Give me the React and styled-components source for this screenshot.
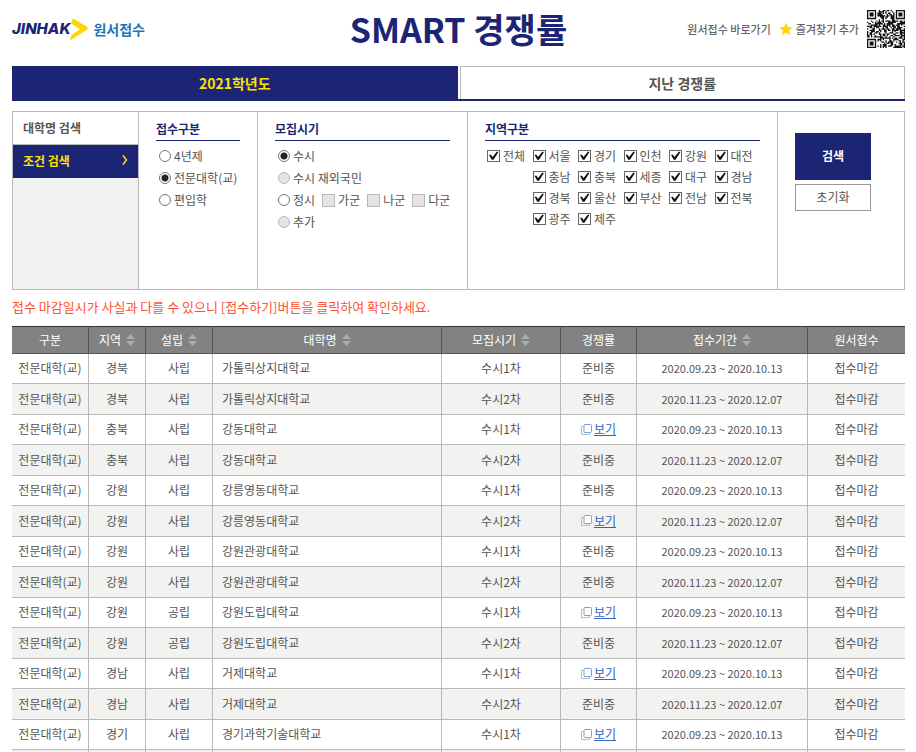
import { useState } from "react"
import styled, { createGlobalStyle } from "styled-components"

const COLOR = {
  navy: '#1c2574',
  yellow: '#ffe100',
  line: '#b8b8b8',
  text: '#555',
  soft: '#f2f2f1',
  notice: '#ff5232',
  link: '#3465bd'
}

const GlobalStyle = createGlobalStyle`
  * {
    box-sizing: border-box;
  }

  body {
    margin: 0;
    background: #fff;
    color: ${COLOR.text};
    font-family: "Noto Sans CJK KR", sans-serif;
    font-size: 12px;
    line-height: 18px;
  }

  button, input {
    font-family: inherit;
    margin: 0;
  }
`

const Page = styled.div`
  padding: 0 11px 0 12px;
`

/* header */
const Header = styled.header`
  display: grid;
  grid-template-columns: 1fr auto 1fr;
  align-items: center;
  height: 66px;
  padding-bottom: 8px;
`
const Logo = styled.a`
  display: flex;
  align-items: center;
  color: ${COLOR.navy};
  text-decoration: none;
`
const LogoName = styled.span`
  font-family: Inter, "Liberation Sans", sans-serif;
  font-size: 15px;
  font-style: italic;
  font-weight: 800;
`
const LogoService = styled.span`
  margin-left: 5px;
  color: #1a76b8;
  font-size: 14px;
  font-weight: 700;
`
const Title = styled.h1`
  margin: 0;
  color: ${COLOR.navy};
  font-size: 34px;
  font-weight: 700;
  line-height: 48px;
`
const QuickMenu = styled.nav`
  display: flex;
  align-items: center;
  justify-content: flex-end;
`
const QuickLink = styled.a`
  display: flex;
  align-items: center;
  gap: 3px;
  margin-right: 8px;
  color: #666;
  font-size: 11px;
  font-weight: 500;
  text-decoration: none;
  white-space: nowrap;
`

/* tabs */
const TabList = styled.div`
  display: flex;
  gap: 2px;
  border-bottom: 2px solid ${COLOR.navy};
`
const Tab = styled.button`
  flex: 1;
  height: 33px;
  padding: 0;
  border: 1px solid ${({ $active }) => $active ? COLOR.navy : COLOR.line};
  border-bottom: 0;
  background: ${({ $active }) => $active ? COLOR.navy : '#fff'};
  color: ${({ $active }) => $active ? COLOR.yellow : COLOR.text};
  font-size: 14px;
  font-weight: 700;
  cursor: pointer;
`

/* search */
const SearchBox = styled.form`
  display: grid;
  grid-template-columns: 126px 119px 210px minmax(0, 1fr) 126px;
  min-height: 179px;
  margin-top: 10px;
  border: 1px solid ${COLOR.line};
`
const SideMenu = styled.div`
  display: flex;
  flex-direction: column;
  border-right: 1px solid ${COLOR.line};
  background: ${COLOR.soft};
`
const SideButton = styled.button`
  display: flex;
  align-items: center;
  justify-content: space-between;
  height: 33px;
  padding: 0 10px 2px;
  border: 0;
  border-bottom: 1px solid ${({ $active }) => $active ? COLOR.navy : COLOR.line};
  background: ${({ $active }) => $active ? COLOR.navy : '#fff'};
  color: ${({ $active }) => $active ? COLOR.yellow : COLOR.text};
  font-size: 12px;
  font-weight: 700;
  cursor: pointer;
`
const Section = styled.fieldset`
  min-width: 0;
  margin: 0;
  padding: 8px 17px 0;
  border: 0;
  border-right: 1px solid ${COLOR.line};
`
const SectionTitle = styled.h2`
  margin: 0 0 4px;
  padding-bottom: 2px;
  border-bottom: 1px solid ${COLOR.navy};
  color: ${COLOR.navy};
  font-size: 12px;
  font-weight: 700;
  line-height: 18px;
`
const OptionRow = styled.div`
  display: flex;
  align-items: center;
  gap: 7px;
  height: 22px;
  padding-left: 3px;
`
const RegionGrid = styled.div`
  display: grid;
  grid-template-columns: repeat(6, 1fr);
  grid-auto-rows: 21px;
  align-items: center;
  padding-left: 2px;
`
const RegionCell = styled.div`
  grid-column-start: ${({ $first }) => $first ? 2 : 'auto'};
`
const OptionLabel = styled.label`
  display: flex;
  align-items: center;
  gap: 3px;
  white-space: nowrap;
`
const Radio = styled.input.attrs({ type: 'radio' })`
  appearance: none;
  flex: none;
  width: 12px;
  height: 12px;
  border: 1px solid #777;
  border-radius: 50%;
  background: #fff;

  &:checked {
    background: radial-gradient(circle, #222 0 3px, #fff 4px);
  }

  &:disabled {
    border-color: ${COLOR.line};
    background: #e4e4e4;
  }
`
const CheckBox = styled.input.attrs({ type: 'checkbox' })`
  appearance: none;
  display: grid;
  place-items: center;
  flex: none;
  width: 13px;
  height: 12px;
  border: 1px solid #666;
  background: #fff;

  &:checked::before {
    content: "";
    width: 10px;
    height: 9px;
    background: #111;
    clip-path: polygon(5% 42%, 25% 42%, 40% 68%, 85% 5%, 98% 15%, 50% 98%, 32% 98%);
  }

  &:disabled {
    height: 13px;
    border-color: ${COLOR.line};
    background: #e4e4e4;
  }
`
const ButtonArea = styled.div`
  display: flex;
  flex-direction: column;
  gap: 4px;
  padding: 21px 33px 0 17px;
`
const SearchButton = styled.button`
  height: 47px;
  padding: 0 0 2px;
  border: 0;
  background: ${COLOR.navy};
  color: #fff;
  font-size: 12px;
  font-weight: 700;
  cursor: pointer;
`
const ResetButton = styled.button`
  height: 27px;
  padding: 0 0 2px;
  border: 1px solid #999;
  background: #fff;
  color: ${COLOR.text};
  font-size: 12px;
  cursor: pointer;
`
const Notice = styled.p`
  margin: 8px 0 10px;
  color: ${COLOR.notice};
  font-size: 13px;
`

/* result table */
const ResultTable = styled.table`
  width: 100%;
  border-collapse: separate;
  border-spacing: 0;
  table-layout: fixed;
`
const HeadCell = styled.th`
  width: ${({ $width }) => $width ? `${$width}px` : 'auto'};
  height: 28px;
  padding: 0;
  border-top: 1px solid #333;
  border-right: 1px solid #555;
  border-bottom: 1px solid #555;
  background: #828282;
  color: #fff;
  font-weight: 400;

  &:last-child {
    border-right: 0;
  }
`
const SortButton = styled.button`
  display: inline-flex;
  align-items: center;
  gap: 5px;
  padding: 0;
  border: 0;
  background: none;
  color: inherit;
  font-size: 12px;
  line-height: 18px;
  vertical-align: top;
  cursor: pointer;
`
const Row = styled.tr`
  height: 30px;

  &:nth-child(even) {
    height: 31px;
    background: ${COLOR.soft};
  }
`
const Cell = styled.td`
  padding: 0 ${({ $left }) => $left ? '9px' : '0'} 1px;
  border-right: 1px solid ${COLOR.line};
  border-bottom: 1px solid ${COLOR.line};
  font-size: ${({ $small }) => $small ? '11px' : '12px'};
  text-align: ${({ $left }) => $left ? 'left' : 'center'};
  white-space: nowrap;

  &:last-child {
    border-right: 0;
  }
`
const EndCell = styled.td`
  height: 3px;
  padding: 0;
  border-right: 1px solid ${COLOR.line};
  background: ${COLOR.soft};

  &:last-child {
    border-right: 0;
  }
`
const ViewLink = styled.a`
  display: inline-flex;
  align-items: center;
  gap: 2px;
  color: ${COLOR.link};
  vertical-align: top;
`

const regions = [
  '전체', '서울', '경기', '인천', '강원', '대전',
  '충남', '충북', '세종', '대구', '경남',
  '경북', '울산', '부산', '전남', '전북',
  '광주', '제주'
]

const columns = [
  { name: '구분', width: 77 },
  { name: '지역', width: 57, sort: true },
  { name: '설립', width: 67, sort: true },
  { name: '대학명', sort: true },
  { name: '모집시기', width: 119, sort: true },
  { name: '경쟁률', width: 76 },
  { name: '접수기간', width: 171, sort: true },
  { name: '원서접수', width: 97 }
]

// rounds : 모집 차수, opened : 경쟁률을 볼 수 있는 차수
const colleges = [
  { region: '경북', type: '사립', name: '가톨릭상지대학교', rounds: [1, 2], opened: [] },
  { region: '충북', type: '사립', name: '강동대학교', rounds: [1, 2], opened: [1] },
  { region: '강원', type: '사립', name: '강릉영동대학교', rounds: [1, 2], opened: [2] },
  { region: '강원', type: '사립', name: '강원관광대학교', rounds: [1, 2], opened: [] },
  { region: '강원', type: '공립', name: '강원도립대학교', rounds: [1, 2], opened: [1] },
  { region: '경남', type: '사립', name: '거제대학교', rounds: [1, 2], opened: [1] },
  { region: '경기', type: '사립', name: '경기과학기술대학교', rounds: [1], opened: [1] }
]

const periods = {
  1: '2020.09.23 ~ 2020.10.13',
  2: '2020.11.23 ~ 2020.12.07'
}

const rows = colleges.flatMap(college => college.rounds.map(round => ({ ...college, round })))

function Arrow() {
  return (
    <svg width="18" height="23" viewBox="0 0 18 23" aria-hidden="true">
      <path d="M3 0.5 L17.5 9 V11.5 L0 22.5 L1.5 17 L10 11.2 L1 5.5 Z" fill="#ffd400" />
    </svg>
  )
}

function Star() {
  return (
    <svg width="14" height="14" viewBox="0 0 14 14" aria-hidden="true">
      <path d="M7 0.5 L8.9 5 L13.7 5.3 L10 8.4 L11.3 13.2 L7 10.6 L2.7 13.2 L4 8.4 L0.3 5.3 L5.1 5 Z" fill="#ffd400" />
    </svg>
  )
}

function SortIcon() {
  return (
    <svg width="9" height="12" viewBox="0 0 9 12" aria-hidden="true">
      <path d="M4.5 0 L9 5 H0 Z M0 7 H9 L4.5 12 Z" fill="#acacac" />
    </svg>
  )
}

function WindowIcon() {
  return (
    <svg width="11" height="11" viewBox="0 0 11 11" fill="none" aria-hidden="true">
      <path d="M2.5 2.5 H0.5 V10.5 H8.5 V9" stroke="#a9bedf" />
      <rect x="3" y="0.5" width="7.5" height="8" rx="1" fill="#fff" stroke="#7f9fd2" />
    </svg>
  )
}

function MenuArrow() {
  return (
    <svg width="6" height="10" viewBox="0 0 6 10" fill="none" aria-hidden="true">
      <path d="M1 0.5 L4.5 5 L1 9.5" stroke="#ffe100" strokeWidth="1.5" />
    </svg>
  )
}

const QR_SIZE = 29

function isFinder(x, y) {
  const dx = Math.abs(x - 3)
  const dy = Math.abs(y - 3)
  const ring = Math.max(dx, dy)
  return ring === 3 || ring <= 1
}

function getModules() {
  const modules = []
  let seed = 20210
  for (let y = 0; y < QR_SIZE; y++) {
    for (let x = 0; x < QR_SIZE; x++) {
      seed = (seed * 1103515245 + 12345) % 2147483648
      const right = x > QR_SIZE - 9
      const bottom = y > QR_SIZE - 9
      const inCorner = (x < 8 || right) && (y < 8 || bottom) && !(right && bottom)
      let dark = seed / 2147483648 > 0.46
      if (inCorner) {
        const fx = right ? x - QR_SIZE + 7 : x
        const fy = bottom ? y - QR_SIZE + 7 : y
        dark = fx >= 0 && fx < 7 && fy >= 0 && fy < 7 && isFinder(fx, fy)
      }
      if (dark) modules.push(`M${x} ${y}h1v1h-1z`)
    }
  }
  return modules.join('')
}

function QrCode() {
  return (
    <svg width="38" height="38" viewBox={`0 0 ${QR_SIZE} ${QR_SIZE}`} role="img" aria-label="QR">
      <path d={getModules()} fill="#111" />
    </svg>
  )
}

function Option({ as: Control, name, label, ...rest }) {
  return (
    <OptionLabel>
      <Control name={name} {...rest} />
      {label}
    </OptionLabel>
  )
}

function SearchForm() {
  const [menu, setMenu] = useState('condition')

  return (
    <SearchBox onSubmit={e => e.preventDefault()}>
      <SideMenu>
        <SideButton type="button" $active={menu === 'name'} onClick={() => setMenu('name')}>
          대학명 검색
        </SideButton>
        <SideButton type="button" $active={menu === 'condition'} onClick={() => setMenu('condition')}>
          조건 검색
          <MenuArrow />
        </SideButton>
      </SideMenu>

      <Section aria-label="접수구분">
        <SectionTitle>접수구분</SectionTitle>
        <OptionRow><Option as={Radio} name="kind" label="4년제" /></OptionRow>
        <OptionRow><Option as={Radio} name="kind" label="전문대학(교)" defaultChecked /></OptionRow>
        <OptionRow><Option as={Radio} name="kind" label="편입학" /></OptionRow>
      </Section>

      <Section aria-label="모집시기">
        <SectionTitle>모집시기</SectionTitle>
        <OptionRow><Option as={Radio} name="season" label="수시" defaultChecked /></OptionRow>
        <OptionRow><Option as={Radio} name="season" label="수시 재외국민" disabled /></OptionRow>
        <OptionRow>
          <Option as={Radio} name="season" label="정시" />
          <Option as={CheckBox} name="group" label="가군" disabled />
          <Option as={CheckBox} name="group" label="나군" disabled />
          <Option as={CheckBox} name="group" label="다군" disabled />
        </OptionRow>
        <OptionRow><Option as={Radio} name="season" label="추가" disabled /></OptionRow>
      </Section>

      <Section aria-label="지역구분">
        <SectionTitle>지역구분</SectionTitle>
        <RegionGrid>
          {regions.map((region, i) => (
            <RegionCell key={region} $first={i > 0 && i % 5 === 1}>
              <Option as={CheckBox} name="region" label={region} defaultChecked />
            </RegionCell>
          ))}
        </RegionGrid>
      </Section>

      <ButtonArea>
        <SearchButton type="submit">검색</SearchButton>
        <ResetButton type="reset">초기화</ResetButton>
      </ButtonArea>
    </SearchBox>
  )
}

export default function App() {
  const [year, setYear] = useState('2021')

  return (
    <>
      <GlobalStyle />
      <Page>
        <Header>
          <Logo href="#">
            <LogoName>JINHAK</LogoName>
            <Arrow />
            <LogoService>원서접수</LogoService>
          </Logo>
          <Title>SMART 경쟁률</Title>
          <QuickMenu>
            <QuickLink href="#">원서접수 바로가기</QuickLink>
            <QuickLink href="#"><Star />즐겨찾기 추가</QuickLink>
            <QrCode />
          </QuickMenu>
        </Header>

        <TabList>
          <Tab type="button" $active={year === '2021'} onClick={() => setYear('2021')}>2021학년도</Tab>
          <Tab type="button" $active={year === 'past'} onClick={() => setYear('past')}>지난 경쟁률</Tab>
        </TabList>

        <SearchForm />

        <Notice>접수 마감일시가 사실과 다를 수 있으니 [접수하기]버튼을 클릭하여 확인하세요.</Notice>

        <ResultTable>
          <thead>
            <tr>
              {columns.map(({ name, width, sort }) => (
                <HeadCell key={name} $width={width} scope="col">
                  {sort ? <SortButton type="button">{name}<SortIcon /></SortButton> : name}
                </HeadCell>
              ))}
            </tr>
          </thead>
          <tbody>
            {rows.map(({ region, type, name, opened, round }) => (
              <Row key={name + round}>
                <Cell>전문대학(교)</Cell>
                <Cell>{region}</Cell>
                <Cell>{type}</Cell>
                <Cell $left>{name}</Cell>
                <Cell>수시{round}차</Cell>
                <Cell>
                  {opened.includes(round) ? <ViewLink href="#"><WindowIcon />보기</ViewLink> : '준비중'}
                </Cell>
                <Cell $small>{periods[round]}</Cell>
                <Cell>접수마감</Cell>
              </Row>
            ))}
          </tbody>
          <tfoot>
            <tr>
              {columns.map(({ name }) => <EndCell key={name} />)}
            </tr>
          </tfoot>
        </ResultTable>
      </Page>
    </>
  )
}
